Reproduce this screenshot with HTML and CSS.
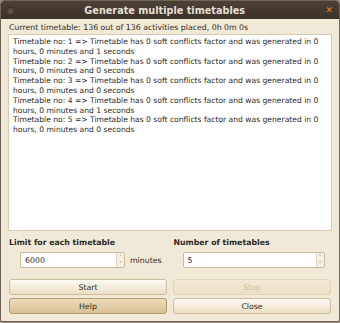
FILE: index.html
```html
<!DOCTYPE html>
<html lang="en">
<head>
    <meta charset="UTF-8">
    <title>Generate multiple timetables</title>
    <link rel="stylesheet" href="styles.css">
</head>
<body>
<div class="window">
    <div class="titlebar">
        <span class="menu-dot"></span>
        <span class="title">Generate multiple timetables</span>
        <span class="close">&#x2715;</span>
    </div>
    <div class="content">
        <p class="status">Current timetable: 136 out of 136 activities placed, 0h 0m 0s</p>
        <div class="log">
            <div>Timetable no: 1 =&gt; Timetable has 0 soft conflicts factor and was generated in 0 hours, 0 minutes and 1 seconds</div>
            <div>Timetable no: 2 =&gt; Timetable has 0 soft conflicts factor and was generated in 0 hours, 0 minutes and 0 seconds</div>
            <div>Timetable no: 3 =&gt; Timetable has 0 soft conflicts factor and was generated in 0 hours, 0 minutes and 0 seconds</div>
            <div>Timetable no: 4 =&gt; Timetable has 0 soft conflicts factor and was generated in 0 hours, 0 minutes and 1 seconds</div>
            <div>Timetable no: 5 =&gt; Timetable has 0 soft conflicts factor and was generated in 0 hours, 0 minutes and 0 seconds</div>
        </div>
        <div class="options">
            <div class="group">
                <div class="label">Limit for each timetable</div>
                <div class="row limit">
                    <div class="spin">
                        <span class="value">6000</span>
                        <span class="arrows"><span>&#x2C4;</span><span>&#x2C5;</span></span>
                    </div>
                    <span class="unit">minutes</span>
                </div>
            </div>
            <div class="group">
                <div class="label">Number of timetables</div>
                <div class="row count">
                    <div class="spin">
                        <span class="value">5</span>
                        <span class="arrows"><span>&#x2C4;</span><span>&#x2C5;</span></span>
                    </div>
                </div>
            </div>
        </div>
        <div class="buttons">
            <button>Start</button>
            <button disabled>Stop</button>
            <button class="default">Help</button>
            <button>Close</button>
        </div>
    </div>
</div>
</body>
</html>
```

FILE: styles.css
```css
body { margin: 0; background: #9a9080; font-family: "DejaVu Sans", sans-serif; font-size: 7.8px; color: #2e2a24; }
.window { width: 338px; height: 320px; border: 1px solid #6f6556; border-radius: 4px 4px 2px 2px; background: #f1e9d7; overflow: hidden; }
.titlebar { height: 18px; background: linear-gradient(#4c4137, #3a3129); display: flex; align-items: center; }
.menu-dot { width: 7px; height: 7px; border-radius: 50%; background: #5d5247; margin-left: 6px; box-shadow: inset 0 1px 1px #2a231d; }
.title { flex: 1; text-align: center; color: #e6dfd2; font-weight: bold; font-size: 9.7px; margin-left: -10px; }
.close { color: #e58a1c; font-size: 9px; font-weight: bold; margin-right: 6px; }
.content { padding: 2px 7px 0 7px; }
.status { margin: 0 0 0 1px; height: 13px; line-height: 13px; }
.log { height: 191px; background: #fff; border: 1px solid #d6cbb3; padding: 2px 4px; font-size: 7.6px; line-height: 9.8px; }
.options { display: flex; margin-top: 6px; }
.group { flex: 1; }
.group + .group { margin-left: 5px; }
.label { font-weight: bold; margin-left: 1px; height: 11px; line-height: 11px; }
.row { display: flex; align-items: center; margin-top: 4px; }
.limit { padding-left: 12px; }
.count { padding-left: 10px; }
.spin { height: 14px; border: 1px solid #c9bb9e; border-radius: 2px; background: #fff; display: flex; align-items: center; }
.limit .spin { width: 103px; }
.count .spin { width: 140px; }
.value { flex: 1; padding-left: 4px; }
.arrows { width: 7px; height: 100%; border-left: 1px solid #e0d6c2; background: #f6f0e3; display: flex; flex-direction: column; align-items: center; color: #8d8068; font-size: 6px; line-height: 7px; }
.unit { margin-left: 5px; }
.buttons { display: grid; grid-template-columns: 158px 158px; column-gap: 6px; row-gap: 3px; margin-top: 11px; padding-left: 1px; }
button { height: 16px; font-family: inherit; font-size: 7.8px; color: #2e2a24; border: 1px solid #cdbd9c; border-radius: 3px; background: linear-gradient(#fcfaf4, #ecdfc4); padding: 0; }
button:disabled { color: #cdbd98; background: linear-gradient(#f3ead6, #ece0c6); border-color: #e0d3b6; }
button.default { background: linear-gradient(#ecdcba, #d9c195); border-color: #b59d70; }
```
